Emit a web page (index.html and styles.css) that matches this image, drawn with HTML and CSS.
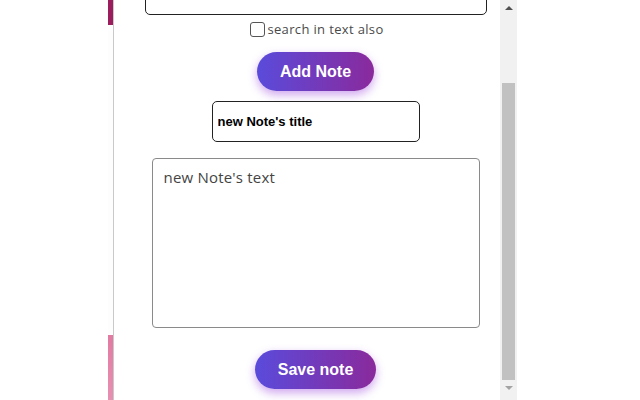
FILE: index.html
```html
<!DOCTYPE html>
<html lang="en">
<head>
    <meta charset="UTF-8">
    <title>Notes</title>
    <link rel="stylesheet" href="styles.css">
</head>
<body>
    <div class="backdrop">
        <div class="strip"></div>
    </div>
    <div class="popup">
        <div class="content">
            <input type="text" class="search-input">
            <label class="check-row">
                <input type="checkbox" class="check">
                <span>search in text also</span>
            </label>
            <button class="button">Add Note</button>
            <input type="text" class="title-input" value="new Note's title">
            <textarea class="note-text">new Note's text</textarea>
            <button class="button save">Save note</button>
        </div>
        <div class="scrollbar">
            <span class="arrow up"></span>
            <div class="thumb"></div>
            <span class="arrow down"></span>
        </div>
    </div>
</body>
</html>
```

FILE: styles.css
```css
* {
    margin: 0;
    padding: 0;
    box-sizing: border-box;
}

body {
    display: flex;
    height: 400px;
    overflow: hidden;
    background-color: #fff;
    font-family: 'Open Sans', sans-serif;
}

.backdrop {
    width: 113px;
    display: flex;
    justify-content: flex-end;
}

.strip {
    width: 5px;
    background: linear-gradient(to bottom, #9b1d5e 0, #9b1d5e 25px, #fdfdfd 25px, #fdfdfd 335px, #e37aa2 335px, #e790b2 400px);
}

.popup {
    position: relative;
    width: 404px;
    border-left: 1px solid #c9c9c9;
}

.content {
    display: flex;
    flex-direction: column;
    align-items: center;
    margin-top: -25px;
}

.search-input {
    width: 342px;
    height: 40px;
    border: 1.5px solid #222;
    border-radius: 5px;
}

.check-row {
    display: flex;
    align-items: center;
    gap: 2px;
    height: 15px;
    margin-top: 7px;
    margin-left: 3px;
    font-size: 13px;
    line-height: 15px;
    color: #4a4a4a;
    letter-spacing: 0.35px;
}

.check {
    appearance: none;
    width: 15px;
    height: 15px;
    border: 1px solid #555;
    border-radius: 3px;
    background-color: #fff;
}

.button {
    height: 39px;
    margin-top: 15px;
    padding: 0 23px;
    border: none;
    border-radius: 20px;
    background: linear-gradient(to right, #5a4bdb, #8a2a9c);
    box-shadow: 0 4px 10px rgba(150, 60, 220, 0.45);
    color: #fff;
    font-family: 'Liberation Sans', Arial, sans-serif;
    font-size: 16px;
    font-weight: bold;
}

.save {
    margin-top: 22px;
}

.title-input {
    width: 208px;
    height: 41px;
    margin-top: 10px;
    padding: 0 5px;
    border: 1.5px solid #222;
    border-radius: 5px;
    font-family: 'Liberation Sans', Arial, sans-serif;
    font-size: 13px;
    font-weight: bold;
    color: #000;
}

.note-text {
    width: 328px;
    height: 170px;
    margin-top: 16px;
    padding: 8px 11px;
    border: 1px solid #8a8a8a;
    border-radius: 4px;
    resize: none;
    font-family: 'Open Sans', sans-serif;
    font-size: 15px;
    letter-spacing: 0.2px;
    color: #444;
}

.scrollbar {
    position: absolute;
    top: 0;
    right: 0;
    width: 17px;
    height: 400px;
    background-color: #f1f1f1;
    display: flex;
    flex-direction: column;
    align-items: center;
}

.thumb {
    width: 13px;
    height: 297px;
    margin-top: 73px;
    background-color: #c1c1c1;
}

.arrow {
    width: 0;
    height: 0;
    border-left: 4px solid transparent;
    border-right: 4px solid transparent;
}

.arrow.up {
    margin-top: 6px;
    border-bottom: 4px solid #505050;
}

.arrow.down {
    margin-top: 6px;
    border-top: 4px solid #a3a3a3;
}
```
